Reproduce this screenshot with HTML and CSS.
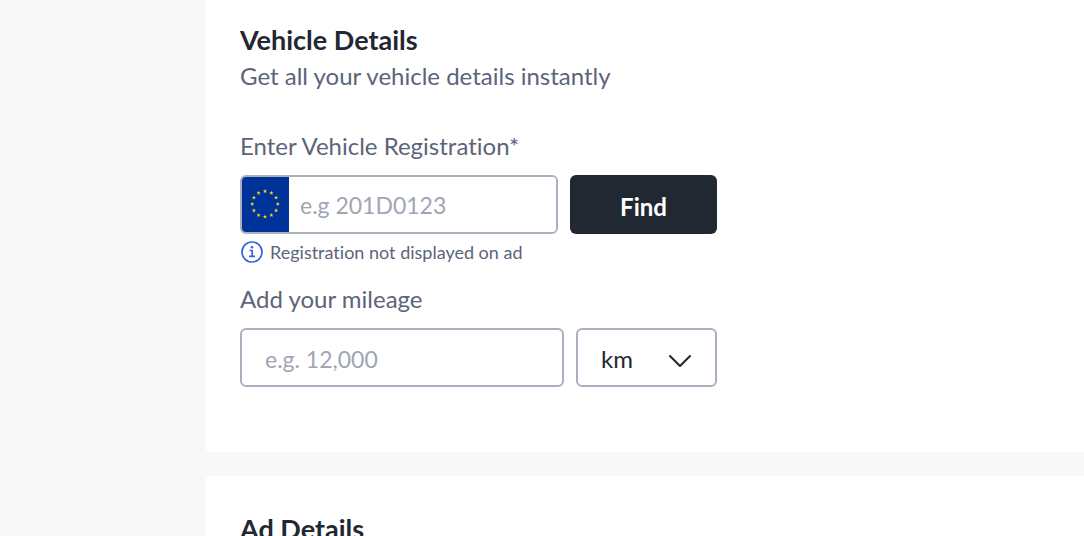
FILE: index.html
```html
<!DOCTYPE html>
<html lang="en">
<head>
    <meta charset="UTF-8">
    <meta name="viewport" content="width=device-width, initial-scale=1.0">
    <title>Place an Ad</title>
    <link rel="stylesheet" href="styles.css">
</head>
<body>
    <main class="sections">
        <section class="card card-vehicle">
            <h2>Vehicle Details</h2>
            <p class="subtitle">Get all your vehicle details instantly</p>

            <form class="vehicle-form">
                <label for="registration">Enter Vehicle Registration*</label>
                <div class="row">
                    <div class="reg-box">
                        <span class="flag">
                            <svg width="47" height="55" viewBox="-23 -27 47 55" aria-hidden="true">
                                <defs>
                                    <polygon id="star" points="0,-2.2 0.6,-0.7 2.1,-0.6 0.9,0.3 1.3,1.8 0,1 -1.3,1.8 -0.9,0.3 -2.1,-0.6 -0.6,-0.7"/>
                                </defs>
                                <g fill="#f0d21a">
                                    <use href="#star" x="0" y="-12.8"/>
                                    <use href="#star" x="6.4" y="-11.1"/>
                                    <use href="#star" x="11.1" y="-6.4"/>
                                    <use href="#star" x="12.8" y="0"/>
                                    <use href="#star" x="11.1" y="6.4"/>
                                    <use href="#star" x="6.4" y="11.1"/>
                                    <use href="#star" x="0" y="12.8"/>
                                    <use href="#star" x="-6.4" y="11.1"/>
                                    <use href="#star" x="-11.1" y="6.4"/>
                                    <use href="#star" x="-12.8" y="0"/>
                                    <use href="#star" x="-11.1" y="-6.4"/>
                                    <use href="#star" x="-6.4" y="-11.1"/>
                                </g>
                            </svg>
                        </span>
                        <input type="text" id="registration" placeholder="e.g 201D0123">
                    </div>
                    <button type="button">Find</button>
                </div>
                <p class="note">
                    <svg width="24" height="24" viewBox="0 0 24 24" fill="none" stroke="#3366e0" aria-hidden="true">
                        <circle cx="12" cy="12" r="10" stroke-width="1.7"/>
                        <path d="M9.5 10.5h2.7v6M9 16.4h6" stroke-width="1.7"/>
                        <circle cx="12" cy="7.3" r="1.3" fill="#3366e0" stroke="none"/>
                    </svg>
                    Registration not displayed on ad
                </p>

                <label for="mileage">Add your mileage</label>
                <div class="row">
                    <input type="text" id="mileage" placeholder="e.g. 12,000">
                    <div class="unit">
                        <select id="unit" aria-label="Mileage unit">
                            <option>km</option>
                            <option>miles</option>
                        </select>
                        <svg width="24" height="14" viewBox="0 0 24 14" fill="none" stroke="#222831" stroke-width="2" stroke-linecap="round" stroke-linejoin="round" aria-hidden="true">
                            <path d="M2 2l10 10L22 2"/>
                        </svg>
                    </div>
                </div>
            </form>
        </section>

        <section class="card">
            <h2>Ad Details</h2>
        </section>
    </main>
</body>
</html>
```

FILE: styles.css
```css
* {
    box-sizing: border-box;
}
body {
    margin: 0;
    background: #f8f8f8;
    color: #222831;
    font-family: Lato, sans-serif;
    font-size: 24px;
    line-height: 36px;
    font-variant-ligatures: none;
}
.sections {
    display: flex;
    flex-direction: column;
    gap: 24px;
    margin-left: 205px;
}
.card {
    background: white;
    border-radius: 6px 0 0 6px;
    padding: 35px;
}
.card-vehicle {
    border-top-left-radius: 0;
    padding-top: 22px;
    padding-bottom: 65px;
}
h2 {
    margin: 0;
    font-size: 27px;
    font-weight: 700;
}
.subtitle {
    margin: 0 0 34px;
    color: #5c647a;
}
.vehicle-form {
    max-width: 477px;
}
label {
    display: block;
    margin-bottom: 11px;
    color: #5c647a;
}
.row {
    display: flex;
    gap: 12px;
    height: 59px;
}
input,
select,
button {
    font: inherit;
    color: #222831;
}
input {
    font-size: 23px;
}
input::placeholder {
    color: #a0a5b3;
    opacity: 1;
}
.reg-box,
#mileage,
select {
    background: white;
    border: 2px solid #abb0be;
    border-radius: 6px;
}
.reg-box {
    display: flex;
    flex: 1;
    min-width: 0;
    overflow: hidden;
}
.reg-box input {
    flex: 1;
    min-width: 0;
    padding: 0 11px;
    border: 0;
}
.flag {
    display: flex;
    align-items: center;
    background: #003399;
}
button {
    width: 147px;
    padding: 4px 0 0;
    background: #222831;
    border: 0;
    border-radius: 6px;
    color: white;
    font-weight: 700;
    cursor: pointer;
}
.note {
    display: flex;
    align-items: center;
    gap: 6px;
    margin: 6px 0 17px;
    color: #5c647a;
    font-size: 18px;
    line-height: 24px;
}
#mileage {
    flex: 1;
    min-width: 0;
    padding: 2px 23px 0;
}
.unit {
    position: relative;
    width: 141px;
}
select {
    width: 100%;
    height: 100%;
    padding: 2px 23px 0;
    appearance: none;
}
/* arrow sits over the select */
.unit svg {
    position: absolute;
    top: 26px;
    right: 25px;
    pointer-events: none;
}
@media (max-width: 700px) {
    .sections {
        margin-left: 0;
    }
}
```
